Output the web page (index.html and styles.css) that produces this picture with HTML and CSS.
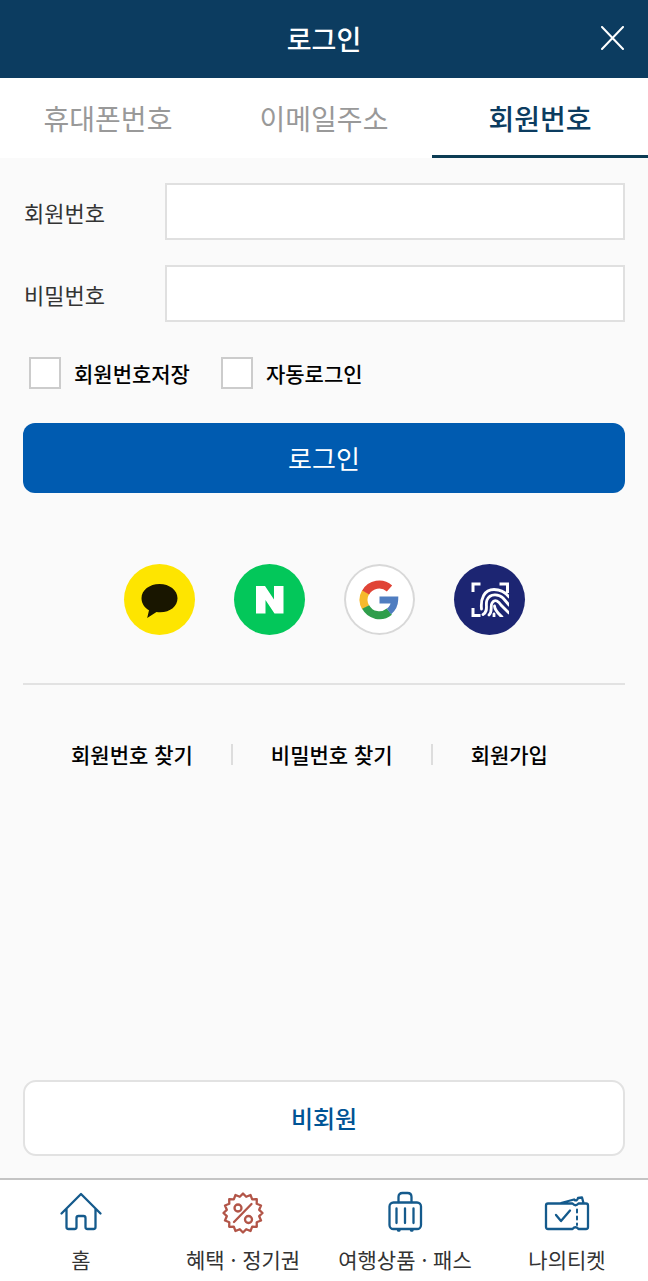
FILE: index.html
```html
<!DOCTYPE html>
<html lang="ko">
<head>
<meta charset="utf-8">
<meta name="viewport" content="width=device-width, initial-scale=1">
<title>로그인</title>
<link rel="stylesheet" href="styles.css">
</head>
<body>
<div class="app">
  <header class="topbar">
    <h1 class="topbar-title">로그인</h1>
    <button class="close" type="button" aria-label="닫기">
      <svg width="26" height="26" viewBox="0 0 26 26" fill="none" stroke="currentColor" stroke-width="2" stroke-linecap="round"><path d="M3 1L24 23M24 1L3 23"/></svg>
    </button>
  </header>
  <nav class="tabs">
    <a class="tab" href="#phone">휴대폰번호</a>
    <a class="tab" href="#email">이메일주소</a>
    <a class="tab tab-active" href="#member" aria-current="page">회원번호</a>
  </nav>
  <main class="content">
    <form class="login">
      <div class="field">
        <label class="field-label" for="member-no">회원번호</label>
        <input class="field-input" id="member-no" type="text">
      </div>
      <div class="field">
        <label class="field-label" for="password">비밀번호</label>
        <input class="field-input" id="password" type="password">
      </div>
      <div class="options">
        <label class="option"><input class="check" type="checkbox">회원번호저장</label>
        <label class="option"><input class="check" type="checkbox">자동로그인</label>
      </div>
      <button class="submit" type="submit">로그인</button>
    </form>
    <div class="social">
      <button class="social-button kakao" type="button" aria-label="카카오 로그인">
        <svg width="71" height="71" viewBox="0 0 71 71"><path fill="#191600" d="M35.500 20C25.500 20 17.500 26.200 17.500 34.200C17.500 39.200 20.500 43.700 25 46.200L23.200 54L32.500 48C45 49.600 53.500 42.700 53.500 34.200C53.500 26.200 45.500 20 35.500 20Z"/></svg>
      </button>
      <button class="social-button naver" type="button" aria-label="네이버 로그인">
        <svg width="71" height="71" viewBox="0 0 71 71"><path fill="#fff" d="M22 22H31L40 35.500V22H49.500V49.500H40.500L31.500 36V49.500H22Z"/></svg>
      </button>
      <button class="social-button google" type="button" aria-label="구글 로그인">
        <svg width="71" height="71" viewBox="0 0 71 71" fill="none" stroke-width="8"><path stroke="#f6b92c" d="M21.700 43.500A15.500 15.500 0 0 1 21.700 28"/><path stroke="#e04436" d="M21.700 28.500A15.500 15.500 0 0 1 45.500 24.500"/><path stroke="#2f9e4b" d="M45.300 47.700A15.500 15.500 0 0 1 21.700 43"/><path stroke="#4f7dc0" stroke-width="7" d="M35.500 36H50.700A15.500 15.500 0 0 1 45 47.500"/></svg>
      </button>
      <button class="social-button bio" type="button" aria-label="지문 로그인">
        <svg width="71" height="71" viewBox="0 0 71 71" fill="none" stroke="#fff" stroke-width="3">
          <clipPath id="print"><rect x="17" y="18" width="38" height="35"/></clipPath>
          <path d="M19 28V20H26.500M45.500 20H53.500V29M19 44V51.500H26.500"/>
          <g clip-path="url(#print)" stroke-width="2.800" stroke-linecap="round"><path d="M27.500 45C26.500 35 30 25.500 40 25.500C47 25.500 52 29 55 33"/><path d="M29 50.500C35 47 31 41 33 36C36 29 45 30 49 34L55 41"/><path d="M35 51C39 47 36 42 38 39C41 34 45 38 47 41L55 49"/><path d="M40.500 42C41 47 45 50 48 53"/><path d="M40 50V53"/></g>
        </svg>
      </button>
    </div>
    <nav class="links">
      <a class="link" href="#find-number">회원번호 찾기</a>
      <a class="link" href="#find-password">비밀번호 찾기</a>
      <a class="link" href="#join">회원가입</a>
    </nav>
    <button class="guest" type="button">비회원</button>
  </main>
  <nav class="bottom">
    <a class="bottom-item" href="#home">
      <svg class="icon" width="48" height="44" viewBox="0 0 48 44"><path d="M4.500 22.500L24 3L43.500 22.500M9.500 18V36Q9.500 38 11.500 38H17.500Q19.500 38 19.500 36V27Q19.500 25 21.500 25H26.500Q28.500 25 28.500 27V36Q28.500 38 30.500 38H36.500Q38.500 38 38.500 36V18"/></svg>
      <span>홈</span>
    </a>
    <a class="bottom-item" href="#benefits">
      <svg class="icon icon-red" width="48" height="44" viewBox="0 0 48 44"><g transform="translate(24 22)"><path d="M0 -19.500L3.200 -16.200L7.500 -18L9.200 -13.700L13.800 -13.800L13.700 -9.200L18 -7.500L16.200 -3.200L19.500 0L16.200 3.200L18 7.500L13.700 9.200L13.800 13.800L9.200 13.700L7.500 18L3.200 16.200L0 19.500L-3.200 16.200L-7.500 18L-9.200 13.700L-13.800 13.800L-13.700 9.200L-18 7.500L-16.200 3.200L-19.500 0L-16.200 -3.200L-18 -7.500L-13.700 -9.200L-13.800 -13.800L-9.200 -13.700L-7.500 -18L-3.200 -16.200Z"/><path d="M8.500 -9L-9 9"/><circle cx="-5" cy="-5" r="3.500"/><circle cx="5.500" cy="6.500" r="3.500"/></g></svg>
      <span>혜택 · 정기권</span>
    </a>
    <a class="bottom-item" href="#travel">
      <svg class="icon" width="48" height="44" viewBox="0 0 48 44"><rect x="8.500" y="11.500" width="31.500" height="26.500" rx="4"/><path d="M17.500 11V6Q17.500 2 21.500 2H26.500Q30.500 2 30.500 6V11M15.500 17.500V32M24 17.500V32M32.500 17.500V32M17 39.500H18.500M30 39.500H31.500"/></svg>
      <span>여행상품 · 패스</span>
    </a>
    <a class="bottom-item" href="#tickets">
      <svg class="icon" width="48" height="44" viewBox="0 0 48 44"><path d="M5 12.500H29.500Q32.500 16 35.500 12.500H43Q45 12.500 45 14.500V36Q45 38 43 38H35.500Q32.500 34.500 29.500 38H5Q3 38 3 36V14.500Q3 12.500 5 12.500ZM13 24L18 30L27 19.500M18 12L31 8.500Q34 11 35 7L39 6.500L40.500 12"/><path stroke-width="2" stroke-dasharray="3 4" d="M34 18.500V34"/></svg>
      <span>나의티켓</span>
    </a>
  </nav>
</div>
</body>
</html>
```
FILE: styles.css
```css
* { box-sizing: border-box; }
body {
  margin: 0;
  background: #fafafa;
  color: #000;
  font-family: "Noto Sans CJK KR", sans-serif;
  font-size: 21px;
  line-height: 32px;
}
a { color: inherit; text-decoration: none; }
button, input { font: inherit; margin: 0; }
button { padding: 0; border: 0; cursor: pointer; }
svg { display: block; }

.app { display: flex; flex-direction: column; min-height: 100vh; }

.topbar {
  display: grid;
  grid-template-columns: 1fr auto 1fr;
  align-items: center;
  height: 78px;
  padding: 0 23px;
  background: #0c3c60;
  color: #fff;
}
.topbar-title { grid-column: 2; margin: 0; font-size: 27px; font-weight: 500; }
.close { justify-self: end; background: none; color: #fff; }

.tabs { display: grid; grid-template-columns: repeat(3, 1fr); height: 80px; background: #fff; }
.tab {
  display: flex;
  align-items: center;
  justify-content: center;
  padding-top: 3px;
  border-bottom: 3px solid transparent;
  color: #999;
  font-size: 28px;
}
.tab-active { border-bottom-color: #0c3c54; color: #0c3c60; font-weight: 500; }

.content { flex: 1; display: flex; flex-direction: column; padding: 25px 23px 22px; }
.field { display: grid; grid-template-columns: 142px 1fr; align-items: center; margin-bottom: 25px; }
.field-label { padding-left: 1px; color: #333; font-size: 22px; }
.field-input { width: 100%; height: 57px; padding: 0 16px; border: 2px solid #e0e0e0; border-radius: 0; background: #fff; }
.options { display: flex; gap: 31px; padding: 10px 6px 0; }
.option { display: flex; align-items: center; gap: 13px; font-weight: 500; }
.check { appearance: none; width: 32px; height: 32px; border: 2px solid #ccc; background: #fff; }
.submit {
  width: 100%;
  height: 70px;
  margin-top: 34px;
  border-radius: 12px;
  background: #005bb0;
  color: #fff;
  font-size: 26px;
}

.social { display: flex; justify-content: center; gap: 39px; padding: 71px 0 48px; border-bottom: 2px solid #e2e2e2; }
.social-button { width: 71px; height: 71px; border-radius: 50%; overflow: hidden; }
.kakao { background: #fee500; }
.naver { background: #03c75a; }
.google { background: #fff; box-shadow: inset 0 0 0 2px #d8d8d8; }
.bio { background: #1c2572; }

.links { display: flex; align-items: center; padding: 53px 48px; }
.link { display: flex; align-items: center; font-weight: 500; }
.link + .link::before { content: ""; width: 2px; height: 21px; margin: 0 38px; background: #ddd; }

.guest {
  height: 76px;
  margin-top: auto;
  border: 2px solid #e2e2e2;
  border-radius: 13px;
  background: #fff;
  color: #005495;
  font-size: 24px;
  font-weight: 500;
}

.bottom {
  display: grid;
  grid-template-columns: repeat(4, 1fr);
  height: 103px;
  padding-top: 11px;
  border-top: 2px solid #c4c4c4;
  background: #fff;
  color: #333;
}
.bottom-item { display: flex; flex-direction: column; align-items: center; gap: 8px; white-space: nowrap; }
.icon { fill: none; stroke: #145a8c; stroke-width: 2.3; stroke-linecap: round; stroke-linejoin: round; }
.icon-red { stroke: #b25548; }
```
